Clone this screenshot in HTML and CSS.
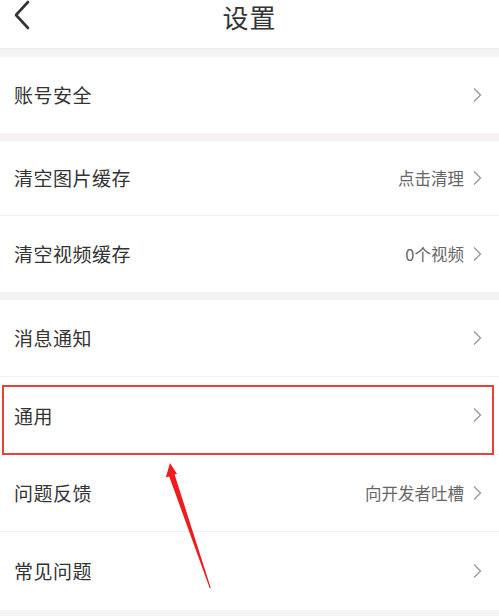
FILE: index.html
```html
<!DOCTYPE html>
<html lang="zh-CN">
<head>
<meta charset="utf-8">
<title>设置</title>
<link rel="stylesheet" href="styles.css">
</head>
<body>
<div class="page">
  <header class="topbar">
    <svg class="back" width="20" height="30" viewBox="0 0 20 30"><path d="M16 2 L4 15 L16 28" fill="none" stroke="#333" stroke-width="2.6" stroke-linecap="round" stroke-linejoin="round"/></svg>
    <h1 class="title">设置</h1>
  </header>
  <div class="gap gap-first"></div>
  <section class="group">
    <div class="row"><span class="label">账号安全</span><span class="right"><svg class="chev" width="10" height="16" viewBox="0 0 10 16"><path d="M2 1.5 L8.5 8 L2 14.5" fill="none" stroke="#9a9a9a" stroke-width="1.4"/></svg></span></div>
  </section>
  <div class="gap gap-pink"></div>
  <section class="group">
    <div class="row"><span class="label">清空图片缓存</span><span class="right"><span class="value">点击清理</span><svg class="chev" width="10" height="16" viewBox="0 0 10 16"><path d="M2 1.5 L8.5 8 L2 14.5" fill="none" stroke="#9a9a9a" stroke-width="1.4"/></svg></span></div>
    <div class="row"><span class="label">清空视频缓存</span><span class="right"><span class="value">0个视频</span><svg class="chev" width="10" height="16" viewBox="0 0 10 16"><path d="M2 1.5 L8.5 8 L2 14.5" fill="none" stroke="#9a9a9a" stroke-width="1.4"/></svg></span></div>
  </section>
  <div class="gap"></div>
  <section class="group group-tall">
    <div class="row"><span class="label">消息通知</span><span class="right"><svg class="chev" width="10" height="16" viewBox="0 0 10 16"><path d="M2 1.5 L8.5 8 L2 14.5" fill="none" stroke="#9a9a9a" stroke-width="1.4"/></svg></span></div>
    <div class="row"><span class="label">通用</span><span class="right"><svg class="chev" width="10" height="16" viewBox="0 0 10 16"><path d="M2 1.5 L8.5 8 L2 14.5" fill="none" stroke="#9a9a9a" stroke-width="1.4"/></svg></span></div>
    <div class="row"><span class="label">问题反馈</span><span class="right"><span class="value">向开发者吐槽</span><svg class="chev" width="10" height="16" viewBox="0 0 10 16"><path d="M2 1.5 L8.5 8 L2 14.5" fill="none" stroke="#9a9a9a" stroke-width="1.4"/></svg></span></div>
    <div class="row"><span class="label">常见问题</span><span class="right"><svg class="chev" width="10" height="16" viewBox="0 0 10 16"><path d="M2 1.5 L8.5 8 L2 14.5" fill="none" stroke="#9a9a9a" stroke-width="1.4"/></svg></span></div>
  </section>
  <div class="highlight"></div>
  <svg class="arrow" width="499" height="616" viewBox="0 0 499 616">
    <polygon points="170,463 177,474 174.6,474.5 210.8,588 209.6,588 169.2,476.5 165.8,477.5" fill="#ee1c1c"/>
  </svg>
</div>
</body>
</html>
```

FILE: styles.css
```css
* { box-sizing: border-box; }
html, body { margin: 0; padding: 0; }
body {
  background: #f5f4f4;
  font-family: "Noto Sans CJK SC", "Noto Sans", sans-serif;
  color: #333;
}
.page {
  position: relative;
  width: 499px;
  height: 616px;
  overflow: hidden;
  background: #f5f4f4;
}
.topbar {
  height: 48px;
  background: #fff;
  display: flex;
  align-items: flex-start;
  justify-content: center;
  position: relative;
  padding-top: 1px;
}
.back {
  position: absolute;
  left: 12px;
  top: 0;
}
.title {
  margin: 0;
  font-size: 26px;
  font-weight: 400;
  line-height: 32px;
  color: #333;
  letter-spacing: 1px;
}
.gap { height: 8px; background: #f4f4f4; }
.gap-first { height: 9px; border-top: 1px solid #ececec; }
.gap-pink { background: #f8f2f2; }
.group { background: #fff; }
.row {
  height: 75.5px;
  display: flex;
  align-items: center;
  justify-content: space-between;
  padding: 0 17px 0 14px;
  border-bottom: 1px solid #f0f0f0;
}
.row:last-child { border-bottom: none; }
.group-tall .row { height: 77.5px; }
.label {
  font-size: 19px;
  color: #333;
  letter-spacing: 0.5px;
}
.right {
  display: flex;
  align-items: center;
  gap: 8px;
}
.value {
  font-size: 16.5px;
  color: #666;
}
.chev { display: block; }
.highlight {
  position: absolute;
  left: 2px;
  top: 385px;
  width: 492px;
  height: 70px;
  border: 2px solid #e8413a;
}
.arrow {
  position: absolute;
  left: 0;
  top: 0;
  pointer-events: none;
}
```
